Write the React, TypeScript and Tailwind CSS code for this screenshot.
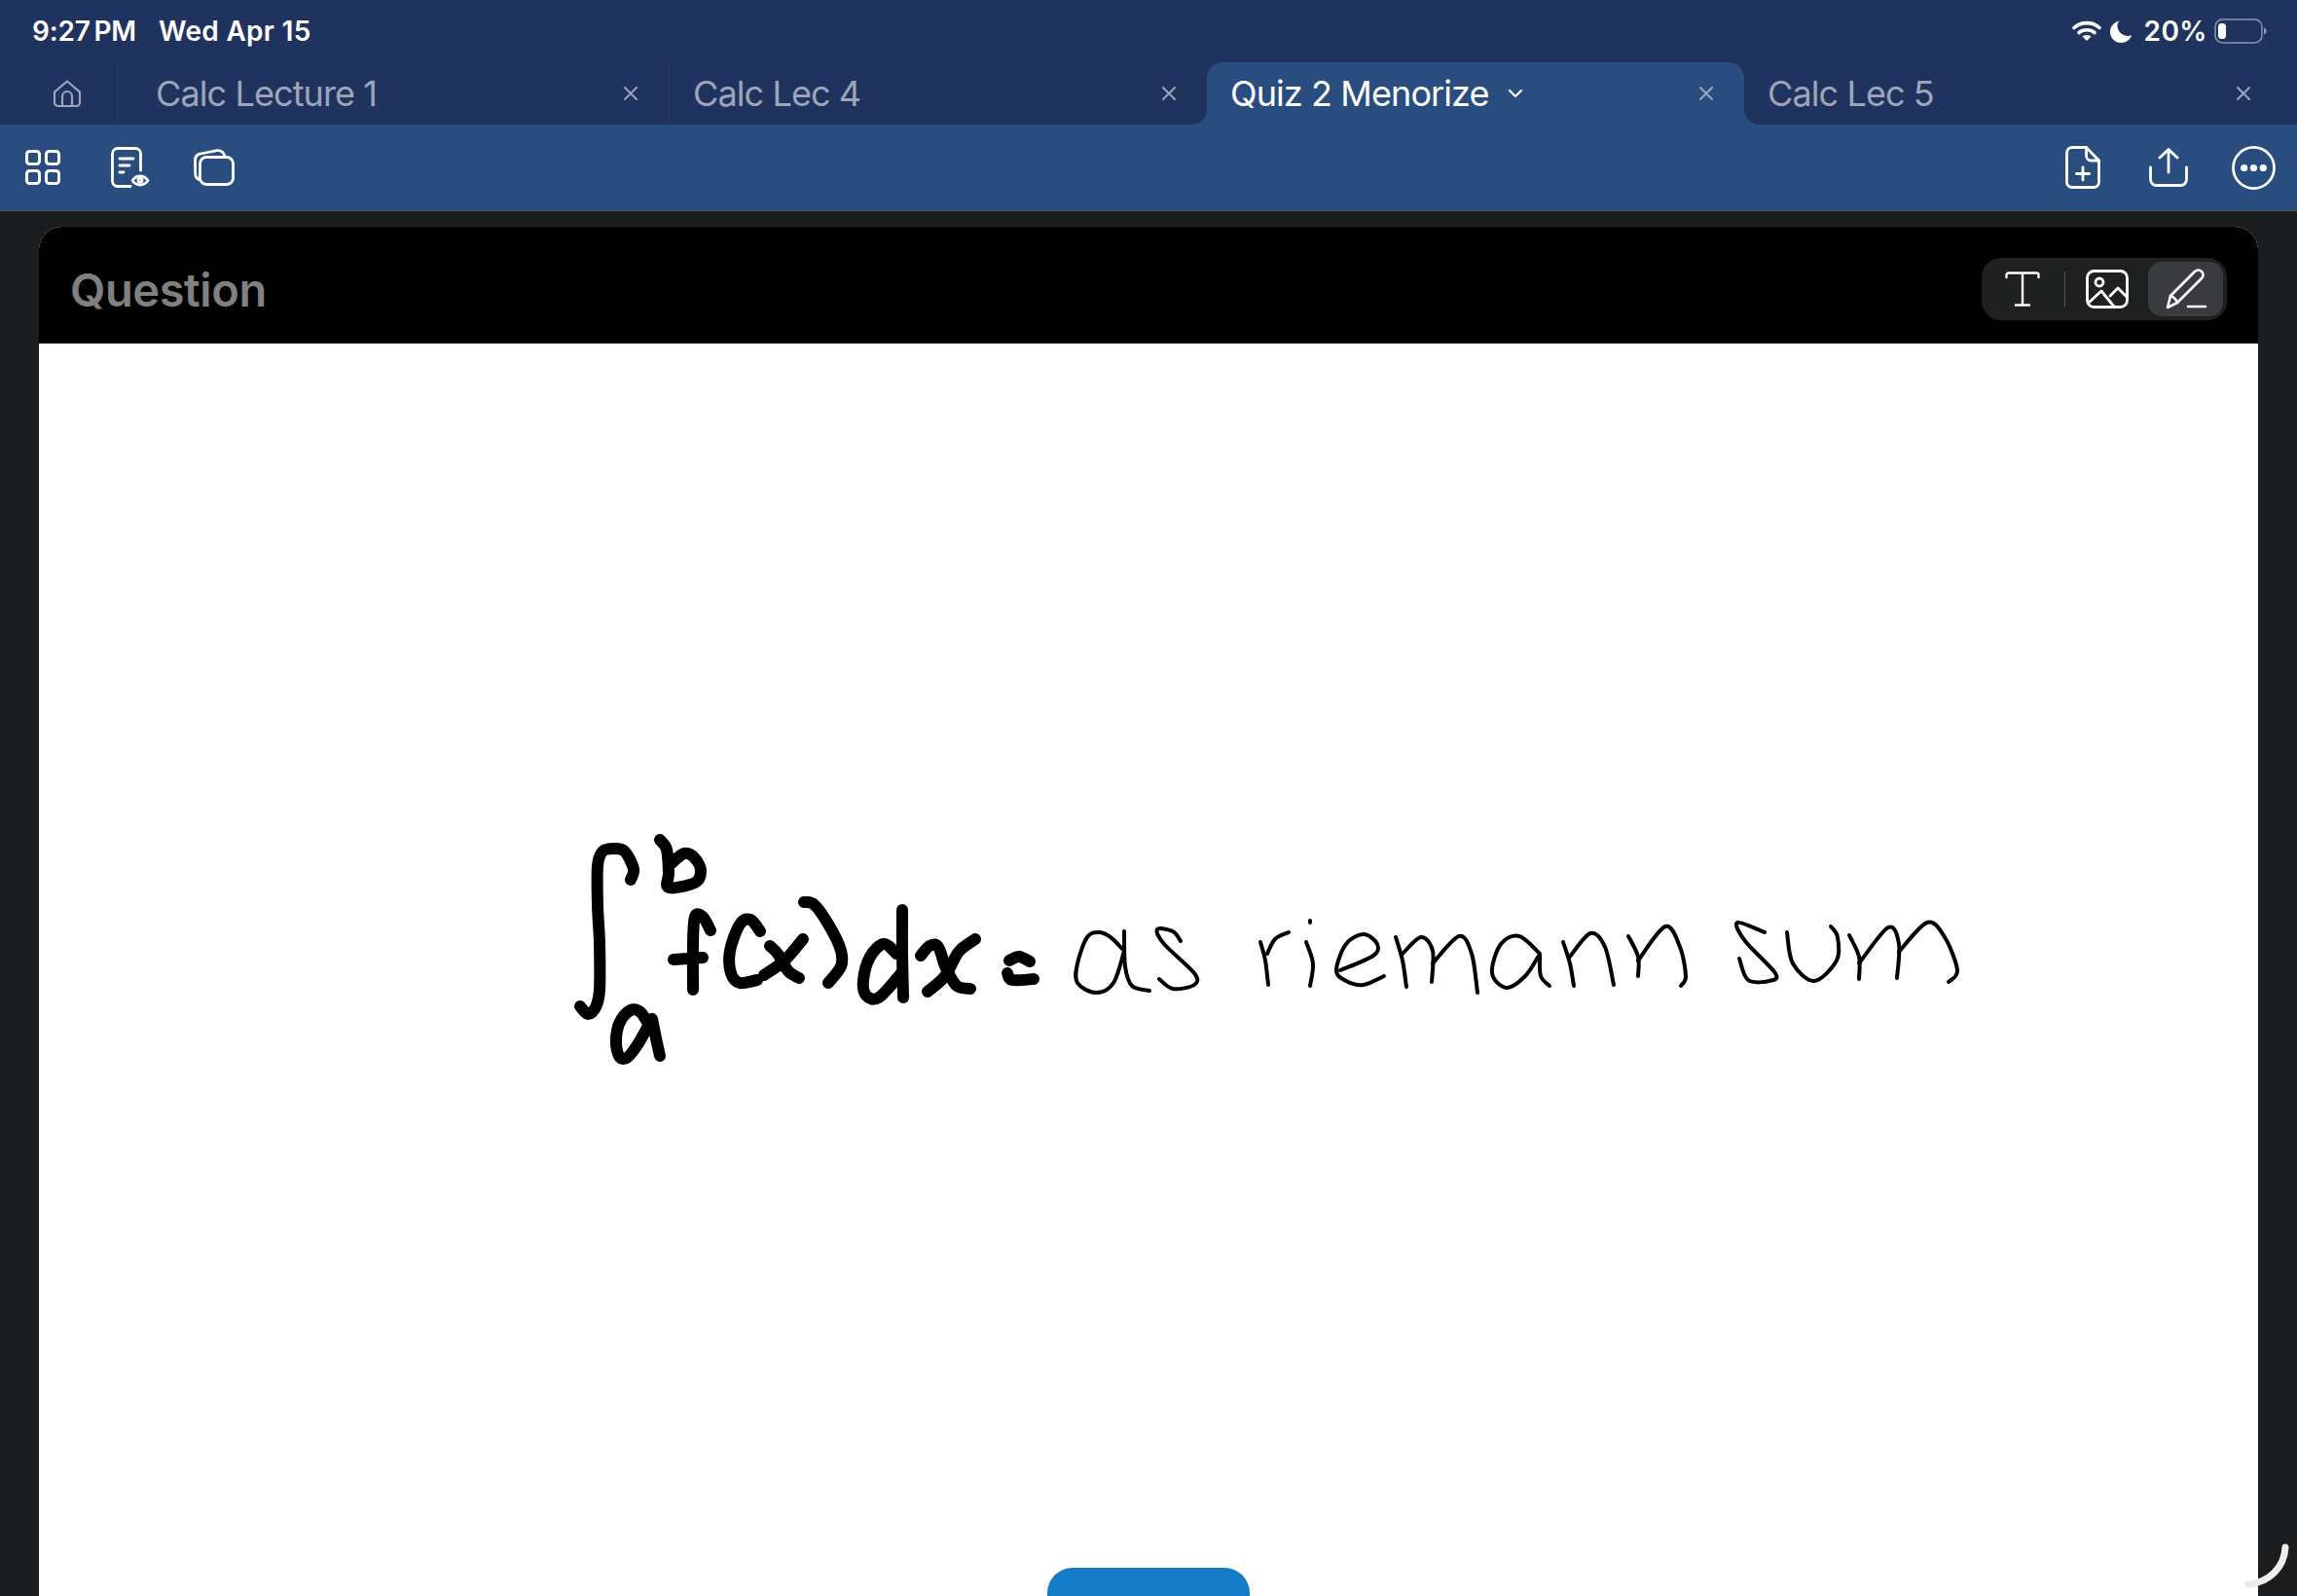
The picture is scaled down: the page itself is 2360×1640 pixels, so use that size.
type Pt = [number, number];

// catmull-rom through the sampled ink points, so the handwriting stays smooth
function smooth(p: Pt[]) {
  let d = `M${p[0][0]} ${p[0][1]}`;
  for (let i = 0; i < p.length - 1; i++) {
    const a = p[i - 1] || p[i];
    const b = p[i];
    const c = p[i + 1];
    const e = p[i + 2] || c;
    const c1x = b[0] + (c[0] - a[0]) / 6;
    const c1y = b[1] + (c[1] - a[1]) / 6;
    const c2x = c[0] - (e[0] - b[0]) / 6;
    const c2y = c[1] - (e[1] - b[1]) / 6;
    d += ` C${c1x.toFixed(1)} ${c1y.toFixed(1)} ${c2x.toFixed(1)} ${c2y.toFixed(1)} ${c[0]} ${c[1]}`;
  }
  return d;
}

const boldInk: Pt[][] = [
  [[648, 904], [651, 893], [642, 875], [631, 872], [619, 875], [614, 890], [614, 930], [616, 970], [616, 1017], [612, 1035], [604, 1042], [596, 1034]],
  [[678, 863], [685, 873], [687, 897], [687, 912], [714, 907], [720, 895], [714, 882], [703, 877], [690, 887]],
  [[730, 956], [722, 942], [714, 942], [712, 970], [712, 1017]],
  [[692, 986], [722, 984]],
  [[781, 957], [771, 945], [760, 950], [750, 977], [751, 1000], [760, 1010], [778, 1007]],
  [[791, 972], [799, 980], [810, 998], [821, 1005]],
  [[825, 965], [806, 987], [785, 1002]],
  [[826, 927], [837, 930], [853, 953], [864, 977], [864, 993], [851, 1010]],
  [[927, 935], [927, 980], [928, 1025]],
  [[921, 980], [908, 970], [894, 983], [887, 1007], [890, 1023], [903, 1025], [926, 1000]],
  [[946, 982], [955, 972], [964, 973], [972, 995], [983, 1013], [997, 1016]],
  [[1002, 965], [985, 978], [971, 1003], [953, 1019]],
  [[1037, 987], [1047, 983], [1058, 988]],
  [[1035, 1000], [1040, 1007], [1062, 1006]],
  [[666, 1052], [658, 1040], [648, 1038], [637, 1050], [633, 1068], [636, 1085], [644, 1087], [654, 1075], [665, 1056]],
  [[670, 1047], [674, 1067], [678, 1085]],
];

const thinInk: Pt[][] = [
  [[1153, 975], [1141, 963], [1129, 958], [1117, 963], [1107, 990], [1107, 1010], [1126, 1020], [1144, 1010], [1155, 977]],
  [[1155, 957], [1156, 993], [1163, 1013], [1181, 1018]],
  [[1213, 967], [1205, 957], [1189, 955], [1196, 970], [1227, 1000], [1227, 1012], [1205, 1016], [1191, 1006]],
  [[1295, 968], [1300, 987], [1303, 1012]],
  [[1302, 980], [1310, 965], [1324, 958]],
  [[1342, 968], [1349, 990], [1346, 1013]],
  [[1346, 946], [1346, 948]],
  [[1377, 997], [1411, 982], [1415, 970], [1401, 960], [1383, 970], [1373, 997], [1383, 1008], [1401, 1012], [1422, 1003]],
  [[1434, 963], [1441, 987], [1445, 1014]],
  [[1441, 980], [1460, 963], [1472, 977], [1471, 1009]],
  [[1472, 990], [1499, 962], [1512, 980], [1518, 1020]],
  [[1582, 980], [1561, 962], [1542, 970], [1533, 1000], [1548, 1015], [1567, 1003], [1581, 982]],
  [[1582, 982], [1583, 1003], [1592, 1013]],
  [[1606, 968], [1613, 990], [1617, 1013]],
  [[1613, 983], [1634, 959], [1649, 973], [1658, 1012]],
  [[1673, 962], [1683, 983], [1683, 1003]],
  [[1683, 987], [1711, 952], [1726, 973], [1732, 1003], [1727, 1013]],
  [[1813, 958], [1785, 948], [1793, 967], [1824, 1000], [1818, 1008], [1796, 1007], [1787, 985]],
  [[1836, 958], [1842, 990], [1864, 1008], [1887, 987], [1888, 963], [1881, 952]],
  [[1900, 961], [1910, 983], [1910, 1006]],
  [[1910, 990], [1940, 953], [1951, 970], [1949, 1005]],
  [[1951, 978], [1980, 948], [1998, 963], [2011, 997], [2002, 1009]],
];

function CloseX() {
  return (
    <svg width="16" height="16" viewBox="0 0 16 16" fill="none" stroke="currentColor" strokeWidth="2" strokeLinecap="round">
      <path d="M2 2l12 12M14 2L2 14" />
    </svg>
  );
}

function Tab({ title, className }: { title: string; className: string }) {
  return (
    <div className={`flex h-full items-center justify-between bg-[#20335f] text-[#9ea5ba] ${className}`}>
      <span className="text-[36px] tracking-[-0.9px]">{title}</span>
      <CloseX />
    </div>
  );
}

export default function App() {
  return (
    <div className="relative flex h-[1640px] w-[2360px] flex-col overflow-hidden bg-[#1b1c1e] font-['Inter',sans-serif]">
      {/* Status bar */}
      <div className="flex h-[64px] items-center justify-between bg-[#20335f] pl-[33px] pr-[31px] text-white">
        <div className="flex items-center gap-[23px] text-[28px] font-semibold">
          <span className="tracking-[-0.2px] [word-spacing:-3px]">9:27 PM</span>
          <span className="tracking-[0.3px]">Wed Apr 15</span>
        </div>
        <div className="flex items-center">
          <svg width="30" height="22" viewBox="0 0 30 22" fill="none" stroke="white" strokeWidth="3.6" strokeLinecap="round">
            <path d="M2 7.5C9.5 1 20.5 1 28 7.5" />
            <path d="M7 12.5C11.5 8.8 18.5 8.8 23 12.5" />
            <path fill="white" stroke="none" d="M15 21l-4.6-4.6c2.6-2 6.6-2 9.2 0z" />
          </svg>
          <svg className="ml-[9px]" width="23" height="23" viewBox="0 0 23 23" fill="white">
            <path d="M9.5 0.5C4 1.6 0 6.2 0 11.7C0 17.9 5 23 11.3 23c5 0 9.3-3.2 10.9-7.7c-1.2.5-2.5.7-3.8.7C12.3 16 7.400 11.200 7.400 5.100c0-1.700.8-3.300 2.100-4.600z" />
          </svg>
          <span className="ml-[11px] text-[28px] font-semibold tracking-[0.5px]">20%</span>
          <svg className="ml-[7px]" width="54" height="26" viewBox="0 0 54 26" fill="none">
            <rect x="1" y="1" width="48" height="24" rx="7.500" stroke="#8c96ae" strokeWidth="1.500" />
            <rect x="4" y="5" width="8" height="16" rx="3.500" fill="white" />
            <path d="M51 9.500c1.800.6 2.600 2 2.600 3.500s-.8 2.900-2.600 3.500z" fill="#8c96ae" />
          </svg>
        </div>
      </div>

      {/* Tabs: the row shows the toolbar colour through the rounded corners next to the active tab */}
      <div className="flex h-[64px] bg-[#294d7f]">
        <div className="flex h-full w-[120px] items-center bg-[#20335f] pl-[54px]">
          <svg width="30" height="28" viewBox="0 0 30 28" fill="none" stroke="#9ea5ba" strokeWidth="2.200" strokeLinejoin="round">
            <path d="M2 12.500L15 1.500l13 11V23a4 4 0 0 1-4 4H6a4 4 0 0 1-4-4z" />
            <path d="M10 27V17a5 5 0 0 1 10 0v10" />
          </svg>
        </div>
        <Tab title="Calc Lecture 1" className="w-[567px] border-l border-[#2b3c66] pl-[39px] pr-[31px]" />
        <Tab title="Calc Lec 4" className="w-[553px] rounded-br-[16px] border-l border-[#2b3c66] pl-[24px] pr-[31px]" />
        <div className="h-full w-[552px] bg-[#20335f]">
          <div className="flex h-full items-center rounded-t-[16px] bg-[#294d7f] pl-[24px] pr-[31px] text-white">
            <span className="text-[36px] tracking-[-0.9px]">Quiz 2 Menorize</span>
            <svg className="ml-[19px]" width="16" height="10" viewBox="0 0 16 10" fill="none" stroke="white" strokeWidth="2.200" strokeLinecap="round" strokeLinejoin="round">
              <path d="M2 2l6 6 6-6" />
            </svg>
            <span className="ml-auto text-[#9ea5ba]">
              <CloseX />
            </span>
          </div>
        </div>
        <Tab title="Calc Lec 5" className="flex-1 rounded-bl-[16px] pl-[24px] pr-[47px]" />
      </div>

      {/* Toolbar */}
      <div className="flex h-[89px] items-center justify-between border-b border-[#54575c] bg-[#294d7f] pl-[26px] pr-[22px]">
        <div className="flex items-center">
          <svg width="36" height="36" viewBox="0 0 36 36" fill="none" stroke="white" strokeWidth="3">
            <rect x="1.500" y="1.500" width="13" height="13" rx="3" />
            <rect x="21.500" y="1.500" width="13" height="13" rx="3" />
            <rect x="1.500" y="21.500" width="13" height="13" rx="3" />
            <rect x="21.500" y="21.500" width="13" height="13" rx="3" />
          </svg>
          <svg className="ml-[52px]" width="40" height="42" viewBox="0 0 40 42" fill="none" stroke="white" strokeWidth="2.800" strokeLinecap="round" strokeLinejoin="round">
            <path d="M20 40.500H7a5.500 5.500 0 0 1-5.500-5.500V7A5.500 5.500 0 0 1 7 1.500h18A5.500 5.500 0 0 1 30.500 7v17" />
            <path d="M9 12h14M9 19h10M9 26h4" />
            <path d="M22 34.500c4-6 12-6 16 0c-4 6-12 6-16 0z" />
            <circle cx="30" cy="34.500" r="2" />
          </svg>
          <svg className="ml-[45px]" width="42" height="38" viewBox="0 0 42 38" fill="none" stroke="white" strokeWidth="2.800" strokeLinejoin="round">
            <rect x="6.500" y="8.500" width="34" height="28" rx="6.500" />
            <path d="M6.500 32C3.500 31 2 29 1.700 26L1.500 12C1.500 8 3.500 5.500 7 5L24 1.700C28.500 1.200 31.500 4 32 8.500" />
          </svg>
        </div>
        <div className="flex items-center">
          <svg width="36" height="44" viewBox="0 0 36 44" fill="none" stroke="white" strokeWidth="2.800" strokeLinecap="round" strokeLinejoin="round">
            <path d="M7 1.500h14.500L34.500 15v22a5.500 5.500 0 0 1-5.500 5.500H7A5.500 5.500 0 0 1 1.500 37V7A5.500 5.500 0 0 1 7 1.500z" />
            <path d="M21.500 1.500V10a5 5 0 0 0 5 5h8" />
            <path d="M18 22v13M11.500 28.500h13" />
          </svg>
          <svg className="ml-[50px]" width="40" height="40" viewBox="0 0 40 40" fill="none" stroke="white" strokeWidth="2.800" strokeLinecap="round" strokeLinejoin="round">
            <path d="M20 25V2M11 10l9-8.500 9 8.500" />
            <path d="M1.500 20v12.500a6 6 0 0 0 6 6h25a6 6 0 0 0 6-6V20" />
          </svg>
          <svg className="ml-[45px]" width="45" height="45" viewBox="0 0 46 46" fill="none">
            <circle cx="23" cy="23" r="21.500" stroke="white" strokeWidth="2.800" />
            <circle cx="13" cy="23" r="3.700" fill="white" />
            <circle cx="23" cy="23" r="3.700" fill="white" />
            <circle cx="33" cy="23" r="3.700" fill="white" />
          </svg>
        </div>
      </div>

      {/* Card */}
      <div className="mx-[40px] mt-[16px] flex flex-1 flex-col overflow-hidden rounded-t-[24px] bg-white">
        <div className="flex h-[120px] shrink-0 items-center justify-between bg-black pl-[32px] pr-[32px] pt-[8px]">
          <span className="mt-[2px] text-[47px] font-semibold tracking-[-0.4px] text-[#808080]">Question</span>
          <div className="flex h-[64px] w-[252px] items-center rounded-[20px] bg-[#1f2120] pl-[24px] pr-[4px]">
            <svg width="36" height="36" viewBox="0 0 36 36" fill="none" stroke="white" strokeWidth="2.400" strokeLinecap="round" strokeLinejoin="round">
              <path d="M1.500 6V3.500a2 2 0 0 1 2-2h29a2 2 0 0 1 2 2V6M18 1.500v33M11 34.500h14" />
            </svg>
            <div className="ml-[25px] h-[36px] w-[1px] bg-[#55575a]" />
            <svg className="ml-[21px]" width="44" height="40" viewBox="0 0 44 40" fill="none" stroke="white" strokeWidth="2.800" strokeLinecap="round" strokeLinejoin="round">
              <rect x="1.500" y="1.500" width="41" height="37" rx="7" />
              <circle cx="14" cy="13" r="4" />
              <path d="M3 34l13-12 13 16M25 27l8-8 9 9" />
            </svg>
            <div className="ml-[20px] flex h-[56px] w-[77px] items-center justify-center rounded-[14px] bg-[#3a3b3e]">
              <svg width="42" height="44" viewBox="0 0 42 44" fill="none" stroke="white" strokeWidth="2.600" strokeLinecap="round" strokeLinejoin="round">
                <path d="M2 41l3-12L30 4c2-2 5-2 7 0s2 5 0 7L12 36z" />
                <path d="M5 29c3 1 6 4 7 7" />
                <path d="M23 40h18" />
              </svg>
            </div>
          </div>
        </div>

        {/* Ink canvas */}
        <div className="flex flex-1 flex-col">
          <svg className="ml-[545px] mt-[502px] self-start" width="1440" height="240" viewBox="585 855 1440 240" fill="none" stroke="black" strokeLinecap="round" strokeLinejoin="round">
            {boldInk.map((s, i) => (
              <path key={i} d={smooth(s)} strokeWidth="12" />
            ))}
            {thinInk.map((s, i) => (
              <path key={i} d={smooth(s)} strokeWidth="4" />
            ))}
          </svg>
          <div className="mt-[516px] h-[80px] w-[208px] shrink-0 self-center rounded-[26px] bg-[#147bc6]" />
        </div>
      </div>

      {/* Scribble handle in the corner */}
      <svg className="absolute bottom-0 right-0" width="60" height="60" viewBox="2300 1580 60 60" fill="none" stroke="#ececec" strokeWidth="7" strokeLinecap="round">
        <path d="M2348 1590C2347 1610 2332 1626 2310 1628" />
      </svg>
    </div>
  );
}
